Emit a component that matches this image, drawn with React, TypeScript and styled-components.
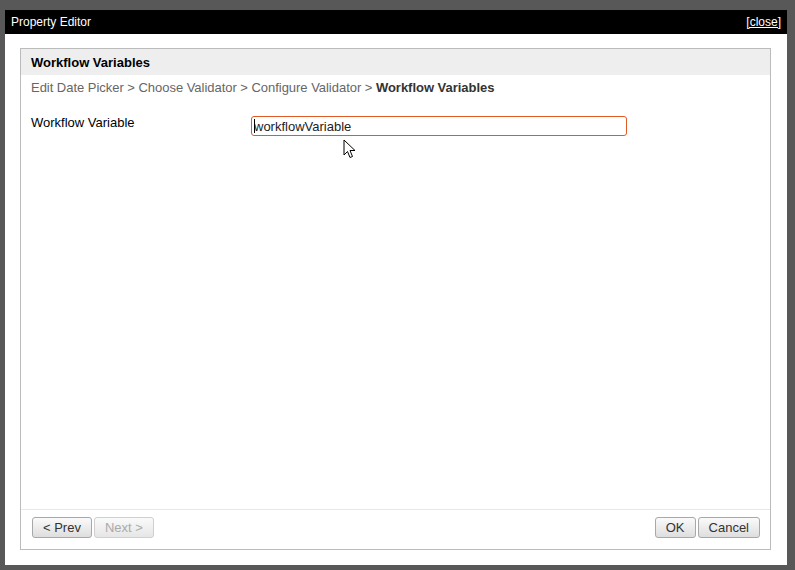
import * as React from "react";
import styled, { createGlobalStyle } from "styled-components";

const GlobalStyle = createGlobalStyle`
  html, body {
    margin: 0;
    padding: 0;
    background: #585858;
  }
  body {
    font-family: "Liberation Sans", Arial, sans-serif;
  }
`;

const App: React.FC = () => {
  return (
    <Screen>
      <GlobalStyle />
      <Dialog>
        <TitleBar>
          <span>Property Editor</span>
          <CloseLink href="#">[close]</CloseLink>
        </TitleBar>
        <DialogBody>
          <Panel>
            <PanelHeader>Workflow Variables</PanelHeader>
            <Breadcrumb>
              Edit Date Picker &gt; Choose Validator &gt; Configure Validator &gt;{" "}
              <strong>Workflow Variables</strong>
            </Breadcrumb>
            <FormRow>
              <Label>Workflow Variable</Label>
              <InputWrap>
                <TextInput defaultValue="workflowVariable" />
                <Caret />
              </InputWrap>
            </FormRow>
            <Spacer />
            <Footer>
              <ButtonGroup>
                <Button>&lt; Prev</Button>
                <Button disabled>Next &gt;</Button>
              </ButtonGroup>
              <ButtonGroup>
                <Button>OK</Button>
                <Button>Cancel</Button>
              </ButtonGroup>
            </Footer>
          </Panel>
        </DialogBody>
        <Pointer width="13" height="20" viewBox="0 0 13 20">
          <path
            d="M1 1 L1 16 L4.5 12.5 L7 18.5 L9.5 17.5 L7 11.5 L12 11.5 Z"
            fill="#fff"
            stroke="#000"
            strokeWidth="1"
            strokeLinejoin="round"
          />
        </Pointer>
      </Dialog>
    </Screen>
  );
};

const Screen = styled.div`
  position: relative;
  width: 795px;
  height: 570px;
  overflow: hidden;
  background: #585858;
`;

const Dialog = styled.div`
  position: absolute;
  top: 10px;
  left: 5px;
  width: 782px;
  height: 555px;
  display: flex;
  flex-direction: column;
  background: #fff;
`;

const TitleBar = styled.div`
  height: 24px;
  background: #000;
  color: #fff;
  font-size: 12px;
  display: flex;
  align-items: center;
  justify-content: space-between;
  padding: 0 6px 0 6px;
`;

const CloseLink = styled.a`
  color: #fff;
  text-decoration: underline;
  font-size: 12px;
`;

const DialogBody = styled.div`
  flex: 1;
  display: flex;
  padding: 14px 16px 15px 15px;
  min-height: 0;
`;

const Panel = styled.div`
  flex: 1;
  display: flex;
  flex-direction: column;
  border: 1px solid #bbb;
`;

const PanelHeader = styled.div`
  height: 26px;
  background: #eee;
  display: flex;
  align-items: center;
  padding: 0 10px;
  font-size: 13px;
  font-weight: bold;
  color: #000;
`;

const Breadcrumb = styled.div`
  padding: 5px 10px;
  font-size: 13px;
  line-height: 15px;
  color: #666;
  letter-spacing: -0.03px;

  strong {
    color: #333;
  }
`;

const FormRow = styled.div`
  display: grid;
  grid-template-columns: 220px 376px;
  align-items: start;
  padding: 14px 10px 0;
`;

const Label = styled.div`
  font-size: 13px;
  color: #000;
  padding-top: 1px;
`;

const InputWrap = styled.div`
  position: relative;
  margin-top: 2px;
`;

const TextInput = styled.input`
  box-sizing: border-box;
  width: 376px;
  height: 20px;
  border: 1px solid #e05a26;
  border-radius: 3px;
  padding: 0 2px;
  font-family: "Liberation Sans", Arial, sans-serif;
  font-size: 13px;
  color: #222;
  outline: none;
  background: #fff;
`;

const Caret = styled.span`
  position: absolute;
  left: 3px;
  top: 3px;
  width: 1px;
  height: 14px;
  background: #000;
`;

const Spacer = styled.div`
  flex: 1;
`;

const Footer = styled.div`
  display: flex;
  justify-content: space-between;
  border-top: 1px solid #e8e8e8;
  padding: 7px 10px 11px 11px;
`;

const ButtonGroup = styled.div`
  display: flex;
  gap: 2px;
`;

const Button = styled.button`
  height: 21px;
  padding: 0 10px;
  font-family: "Liberation Sans", Arial, sans-serif;
  font-size: 13px;
  color: #333;
  background: linear-gradient(#fafafa, #dedede);
  border: 1px solid #a8a8a8;
  border-radius: 3px;
  cursor: pointer;

  &:disabled {
    color: #aaa;
    border-color: #cfcfcf;
    background: linear-gradient(#fafafa, #e6e6e6);
    cursor: default;
  }
`;

const Pointer = styled.svg`
  position: absolute;
  left: 338px;
  top: 129px;
  pointer-events: none;
`;

export default App;
